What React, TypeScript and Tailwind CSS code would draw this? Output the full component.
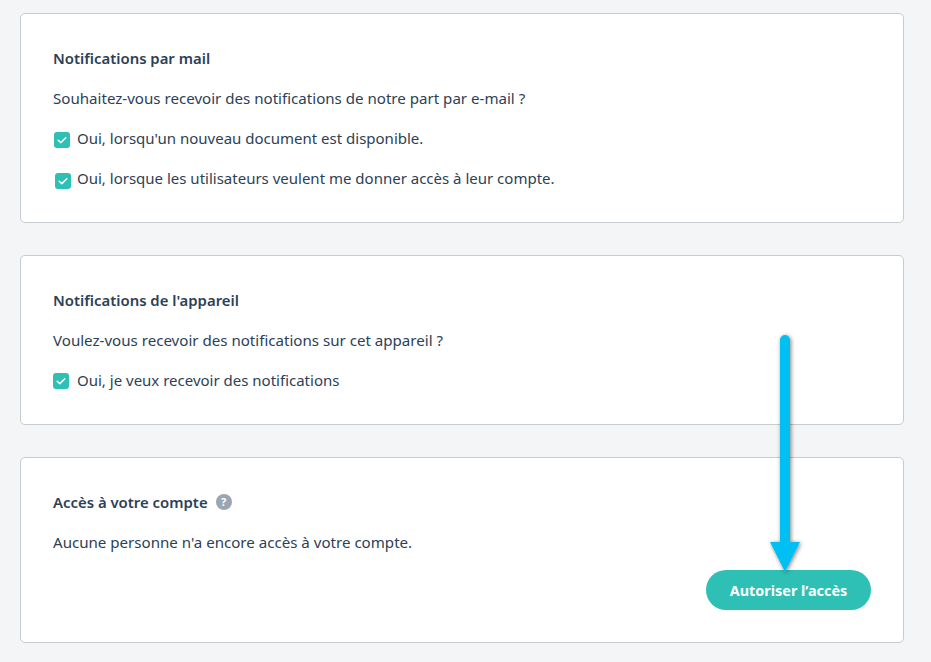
const Check = ({ className = "" }: { className?: string }) => (
  <span className={`flex h-4 w-4 shrink-0 items-center justify-center rounded-[3px] bg-[#2ec0b4] ${className}`}>
    <svg width="10" height="10" viewBox="0 0 10 10" fill="none" stroke="white" strokeWidth="1.5" strokeLinecap="round" strokeLinejoin="round">
      <path d="M1.2 5.2 3.8 7.6 8.8 2.8" />
    </svg>
  </span>
)

const Row = ({ label, className = "" }: { label: string; className?: string }) => (
  <div className="flex h-10 items-center text-[15px]">
    <Check className={className} />
    <span className="ml-2">{label}</span>
  </div>
)

export default function App() {
  return (
    <div className="relative h-[662px] w-[931px] overflow-hidden bg-[#f3f5f7] pl-5 pr-[27px] pt-[13px] font-['Noto_Sans',sans-serif] text-[15.1px] text-[#2c4156]">
      <section className="h-[210px] rounded-[5px] border border-[#c5cbd0] bg-white px-8 pt-6">
        <h2 className="flex h-10 items-center text-[14.9px] font-semibold">Notifications par mail</h2>
        <p className="flex h-10 items-center">Souhaitez-vous recevoir des notifications de notre part par e-mail ?</p>
        <Row label="Oui, lorsqu'un nouveau document est disponible." className="ml-px mr-[-1px] mt-1" />
        <Row label="Oui, lorsque les utilisateurs veulent me donner accès à leur compte." className="ml-0.5 mr-[-2px] mt-1.5" />
      </section>

      <section className="mt-8 h-[170px] rounded-[5px] border border-[#c5cbd0] bg-white px-8 pt-6">
        <h2 className="flex h-10 items-center text-[14.9px] font-semibold">Notifications de l'appareil</h2>
        <p className="flex h-10 items-center">Voulez-vous recevoir des notifications sur cet appareil ?</p>
        <Row label="Oui, je veux recevoir des notifications" className="mt-0.5" />
      </section>

      <section className="mt-8 h-[186px] rounded-[5px] border border-[#c5cbd0] bg-white px-8 pt-6">
        <h2 className="flex h-10 items-center text-[14.9px] font-semibold">
          Accès à votre compte
          <span className="ml-2 flex h-4 w-4 items-center justify-center rounded-full bg-[#9aa7b1] text-[11px] font-bold text-white">?</span>
        </h2>
        <p className="flex h-10 items-center">Aucune personne n'a encore accès à votre compte.</p>
        <div className="flex justify-end">
          <button className="mt-2 h-10 w-[165px] rounded-full bg-[#2ec0b4] pt-px text-[14.4px] font-bold text-white">Autoriser l’accès</button>
        </div>
      </section>

      {/* annotation arrow drawn over the page */}
      <svg className="absolute left-[760px] top-[325px]" width="50" height="260" viewBox="0 0 50 260" fill="none">
        <defs>
          <filter id="s" x="-50%" y="-10%" width="200%" height="120%">
            <feDropShadow dx="1" dy="1" stdDeviation="2" floodColor="#000" floodOpacity="0.5" />
          </filter>
        </defs>
        <path d="M25 10a5 5 0 0 1 5 5V217H40L25 247 10 217H20V15a5 5 0 0 1 5-5Z" fill="#00bff3" filter="url(#s)" />
      </svg>
    </div>
  )
}
